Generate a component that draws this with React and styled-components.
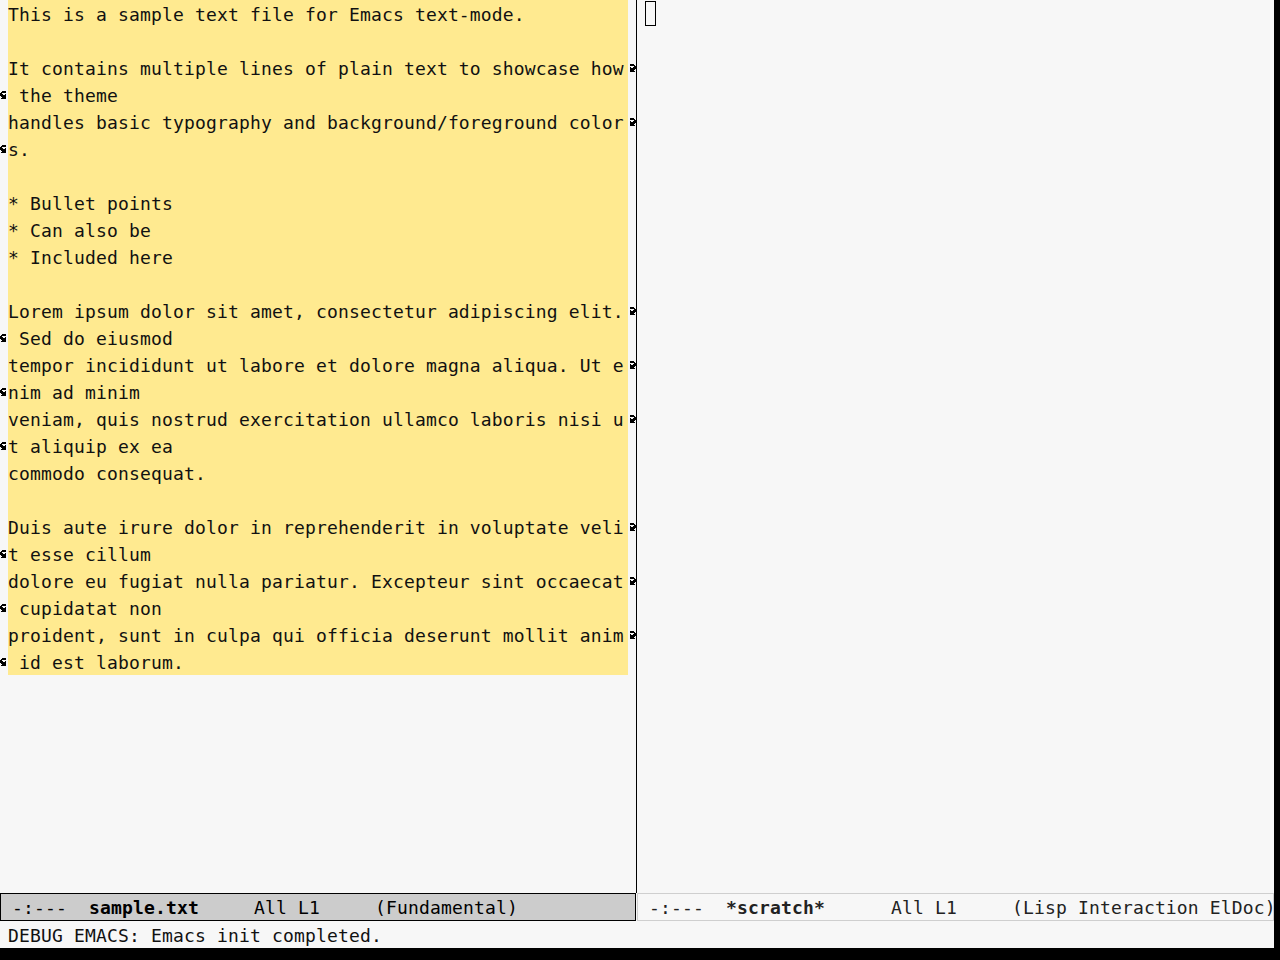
import React from "react";
import styled, { createGlobalStyle } from "styled-components";

const MONO = `"DejaVu Sans Mono", "Liberation Mono", monospace`;
const COLS = 56;

const Global = createGlobalStyle`
  html, body { margin: 0; padding: 0; background: #000; }
  #root { width: 1280px; height: 960px; }
`;

const Frame = styled.div`
  width: 1274px;
  height: 948px;
  background: #f7f7f7;
  display: flex;
  flex-direction: column;
  font-family: ${MONO};
  font-size: 18px;
  letter-spacing: 0.16px;
  color: #111;
`;

const Windows = styled.div`
  display: flex;
  height: 921px;
`;

const Window = styled.div`
  display: flex;
  flex-direction: column;
  width: ${(p) => p.$w}px;
`;

const Body = styled.div`
  flex: 1;
  display: flex;
  flex-direction: column;
  border-right: ${(p) => (p.$divider ? "1px solid #000" : "none")};
`;

const Row = styled.div`
  display: flex;
  height: 27px;
  flex: none;
`;

const Fringe = styled.div`
  width: 8px;
  flex: none;
  display: flex;
  align-items: center;
`;

const Text = styled.div`
  width: ${(p) => p.$w}px;
  flex: none;
  box-sizing: border-box;
  padding-top: 2px;
  line-height: 25px;
  white-space: pre;
  overflow: hidden;
  background: ${(p) => (p.$hl ? "#ffea90" : "transparent")};
`;

const CursorCell = styled.div`
  flex: none;
  padding-top: 1px;
`;

const Cursor = styled.div`
  width: 11px;
  height: 25px;
  box-sizing: border-box;
  border: 1px solid #000;
`;

const ModeLine = styled.div`
  width: ${(p) => p.$w}px;
  height: 28px;
  box-sizing: border-box;
  border: 1px solid ${(p) => (p.$active ? "#000" : "#cfcfcf")};
  background: ${(p) => (p.$active ? "#cccccc" : "#f7f7f7")};
  color: ${(p) => (p.$active ? "#000" : "#222")};
  padding-top: 2px;
  line-height: 24px;
  white-space: pre;
`;

const BufName = styled.span`
  font-weight: bold;
`;

const Echo = styled.div`
  height: 27px;
  box-sizing: border-box;
  padding: 3px 0 0 8px;
  line-height: 24px;
  white-space: pre;
  color: #111;
`;

// Emacs fringe bitmaps (8x8), one byte per row, MSB on the left.
const LEFT_CURLY = [0x3c, 0x7c, 0xc0, 0xe4, 0xfc, 0x7c, 0x3c, 0x7c];
const RIGHT_CURLY = [0x3c, 0x3e, 0x03, 0x27, 0x3f, 0x3e, 0x3c, 0x3e];

function FringeBitmap({ bits }) {
  const cells = [];
  bits.forEach((byte, y) => {
    for (let x = 0; x < 8; x++) {
      if (byte & (0x80 >> x)) cells.push(<rect key={`${x}-${y}`} x={x} y={y} width="1" height="1" />);
    }
  });
  return (
    <svg width="8" height="8" viewBox="0 0 8 8" shapeRendering="crispEdges" fill="#000">
      {cells}
    </svg>
  );
}

const SAMPLE = [
  "This is a sample text file for Emacs text-mode.",
  "",
  "It contains multiple lines of plain text to showcase how the theme",
  "handles basic typography and background/foreground colors.",
  "",
  "* Bullet points",
  "* Can also be",
  "* Included here",
  "",
  "Lorem ipsum dolor sit amet, consectetur adipiscing elit. Sed do eiusmod",
  "tempor incididunt ut labore et dolore magna aliqua. Ut enim ad minim",
  "veniam, quis nostrud exercitation ullamco laboris nisi ut aliquip ex ea",
  "commodo consequat.",
  "",
  "Duis aute irure dolor in reprehenderit in voluptate velit esse cillum",
  "dolore eu fugiat nulla pariatur. Excepteur sint occaecat cupidatat non",
  "proident, sunt in culpa qui officia deserunt mollit anim id est laborum.",
];

// Split logical lines into visual rows, marking continuation on both sides.
function visualRows(lines) {
  const rows = [];
  lines.forEach((line) => {
    const parts = [];
    if (line.length === 0) parts.push("");
    for (let i = 0; i < line.length; i += COLS) parts.push(line.slice(i, i + COLS));
    parts.forEach((text, i) => {
      rows.push({ text, contLeft: i > 0, contRight: i < parts.length - 1 });
    });
  });
  return rows;
}

export default function App() {
  const rows = visualRows(SAMPLE);
  return (
    <>
      <Global />
      <Frame>
        <Windows>
          <Window $w={637}>
            <Body $divider>
              {rows.map((r, i) => (
                <Row key={i}>
                  <Fringe>{r.contLeft && <FringeBitmap bits={LEFT_CURLY} />}</Fringe>
                  <Text $w={620} $hl>
                    {r.text}
                  </Text>
                  <Fringe>{r.contRight && <FringeBitmap bits={RIGHT_CURLY} />}</Fringe>
                </Row>
              ))}
            </Body>
            <ModeLine $w={636} $active>
              {" -:---  "}
              <BufName>sample.txt</BufName>
              {"     All L1     (Fundamental)"}
            </ModeLine>
          </Window>
          <Window $w={637}>
            <Body>
              <Row>
                <Fringe />
                <CursorCell>
                  <Cursor />
                </CursorCell>
              </Row>
            </Body>
            <ModeLine $w={637}>
              {" -:---  "}
              <BufName>*scratch*</BufName>
              {"      All L1     (Lisp Interaction ElDoc)"}
            </ModeLine>
          </Window>
        </Windows>
        <Echo>DEBUG EMACS: Emacs init completed.</Echo>
      </Frame>
    </>
  );
}
